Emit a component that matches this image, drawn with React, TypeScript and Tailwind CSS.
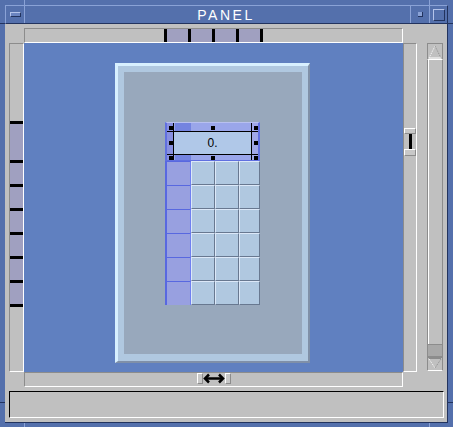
import React from "react";

const Tick = ({ v = false }: { v?: boolean }) =>
  v ? <div className="h-[3px] w-full bg-black shrink-0" /> : <div className="w-[3px] h-full bg-black shrink-0" />;

function Header() {
  const handle = "absolute w-[4px] h-[4px] bg-black";
  return (
    <div className="relative h-[39px] border-t border-t-[#b8c0f0] border-l-2 border-l-[#6070e0] border-r-2 border-r-[#6070e0] border-b border-b-[#6070e0]">
      <div className="grid grid-cols-[6px_77px_6px] grid-rows-[8px_22px_5px] gap-px bg-black w-[91px] h-[37px]">
        <div className="bg-[#8890e0]" />
        <div className="flex">
          <div className="w-[1px] bg-[#98a4ea]" />
          <div className="w-[16px] bg-[#7484e0]" />
          <div className="flex-1 bg-[#9aa6ea]" />
        </div>
        <div className="bg-[#a0a8e8]" />
        <div className="bg-[#8890e0]" />
        <div className="bg-[#b0c8e8] flex items-center justify-center text-[12px] leading-none text-black font-['Liberation_Sans',sans-serif]">
          0.
        </div>
        <div className="bg-[#a0a8e8]" />
        <div className="bg-[#8890e0]" />
        <div className="flex">
          <div className="w-[1px] bg-[#98a4ea]" />
          <div className="w-[16px] bg-[#7484e0]" />
          <div className="flex-1 bg-[#9aa6ea]" />
        </div>
        <div className="bg-[#a0a8e8]" />
      </div>
      <div className={`${handle} left-[2px] top-[3px]`} />
      <div className={`${handle} left-[44px] top-[3px]`} />
      <div className={`${handle} left-[87px] top-[3px]`} />
      <div className={`${handle} left-[2px] top-[18px]`} />
      <div className={`${handle} left-[87px] top-[18px]`} />
      <div className={`${handle} left-[2px] top-[33px]`} />
      <div className={`${handle} left-[44px] top-[33px]`} />
      <div className={`${handle} left-[87px] top-[33px]`} />
    </div>
  );
}

function Row() {
  const cell =
    "h-full bg-[#b0c8e0] border-t border-l border-t-[#dce8f8] border-l-[#dce8f8] border-r border-b border-r-[#687890] border-b-[#687890]";
  return (
    <div className="flex h-[24px]">
      <div className="w-[26px] h-full bg-[#98a0e0] border-l-2 border-l-[#5868e0] border-t border-t-[#5868e0] border-r border-r-[#7080f0]" />
      <div className={`w-[24px] ${cell}`} />
      <div className={`w-[24px] ${cell}`} />
      <div className={`w-[21px] ${cell}`} />
    </div>
  );
}

export default function App() {
  const light = "#8aa2d6";
  return (
    <div className="relative w-[453px] h-[427px] bg-[#5470ac] pt-[5px] pl-[5px] pr-[5px] pb-[4px] overflow-hidden font-['Liberation_Sans',sans-serif]">
      {/* frame corner marks */}
      <div className="absolute left-[24px] top-0 w-px h-[5px] bg-[#8aa2d6]" />
      <div className="absolute left-[429px] top-0 w-px h-[5px] bg-[#8aa2d6]" />
      <div className="absolute left-0 top-[23px] w-[5px] h-px bg-[#22335e]" />
      <div className="absolute right-0 top-[23px] w-[5px] h-px bg-[#22335e]" />
      <div className="absolute left-0 top-[402px] w-[5px] h-px bg-[#22335e]" />
      <div className="absolute right-0 top-[402px] w-[5px] h-px bg-[#22335e]" />
      <div className="absolute left-[24px] bottom-0 w-px h-[4px] bg-[#8aa2d6]" />
      <div className="absolute left-[429px] bottom-0 w-px h-[4px] bg-[#8aa2d6]" />

      {/* title bar */}
      <div className="flex h-[19px] border-t border-l border-t-[#8aa2d6] border-l-[#8aa2d6] border-b border-r border-b-[#22335e] border-r-[#22335e] bg-[#5470ac]">
        <div className="w-[19px] flex items-center justify-center border-r border-r-[#8aa2d6]">
          <div className="w-[11px] h-[5px] bg-[#6a84c0] border-t border-t-[#b4c4ea] border-b border-b-[#22335e] border-l border-l-[#b4c4ea] border-r border-r-[#22335e]" />
        </div>
        <div className="flex-1 flex items-center justify-center pl-[17px] pt-[1px] text-white text-[14px] leading-none tracking-[2.5px]">
          PANEL
        </div>
        <div className="w-[19px] flex items-center justify-center border-l border-l-[#8aa2d6]">
          <div className="w-[5px] h-[5px] bg-[#8aa2d6] border-r border-b border-r-[#22335e] border-b-[#22335e]" />
        </div>
        <div className="w-[18px] flex items-center justify-center border-l border-l-[#8aa2d6]">
          <div className="w-[12px] h-[12px] border border-t-[#b4c4ea] border-l-[#b4c4ea] border-b-[#22335e] border-r-[#22335e]" />
        </div>
      </div>

      {/* gray body */}
      <div className="flex flex-col h-[399px] bg-[#c0c0c0] border-r border-b border-r-[#22335e] border-b-[#22335e]">
        {/* top ruler */}
        <div className="mt-[4px] ml-[19px] w-[379px] h-[15px] border border-t-[#8c8c8c] border-l-[#8c8c8c] border-b-white border-r-white">
          <div className="flex h-full pl-[139px]">
            <Tick />
            <div className="w-[21px] bg-[#a0a0c0]" />
            <Tick />
            <div className="w-[21px] bg-[#a0a0c0]" />
            <Tick />
            <div className="w-[21px] bg-[#a0a0c0]" />
            <Tick />
            <div className="w-[21px] bg-[#a0a0c0]" />
            <Tick />
          </div>
        </div>

        {/* main row */}
        <div className="flex h-[329px]">
          {/* left ruler */}
          <div className="ml-[4px] w-[15px] h-full border border-t-[#8c8c8c] border-l-[#8c8c8c] border-b-white border-r-white flex flex-col pt-[77px]">
            <Tick v />
            <div className="h-[36px] bg-[#a0a0c0]" />
            <Tick v />
            <div className="h-[21px] bg-[#a0a0c0]" />
            <Tick v />
            <div className="h-[21px] bg-[#a0a0c0]" />
            <Tick v />
            <div className="h-[21px] bg-[#a0a0c0]" />
            <Tick v />
            <div className="h-[21px] bg-[#a0a0c0]" />
            <Tick v />
            <div className="h-[21px] bg-[#a0a0c0]" />
            <Tick v />
            <div className="h-[21px] bg-[#a0a0c0]" />
            <Tick v />
          </div>

          {/* canvas */}
          <div className="relative w-[379px] h-full bg-[#6080c0]">
            <div className="absolute left-[91px] top-[20px] w-[195px] h-[300px] border-t-[3px] border-l-[3px] border-t-[#d8f0ff] border-l-[#d8f0ff] border-r-[2px] border-b-[2px] border-r-[#8090a8] border-b-[#8090a8] bg-[#b0c8e0] pt-[6px] pl-[6px] pr-[6px] pb-[7px]">
              <div className="w-full h-full bg-[#98a8bc] pl-[41px] pt-[50px]">
                <div className="w-[95px]">
                  <Header />
                  <Row />
                  <Row />
                  <Row />
                  <Row />
                  <Row />
                  <Row />
                </div>
              </div>
            </div>
          </div>

          {/* right ruler */}
          <div className="w-[14px] h-full border border-t-[#8c8c8c] border-l-[#8c8c8c] border-b-white border-r-white flex flex-col items-center pt-[84px]">
            <div className="w-[12px] h-[6px] bg-[#c8c8c8] border border-t-white border-l-white border-b-[#8c8c8c] border-r-[#8c8c8c]" />
            <div className="w-[3px] h-[15px] bg-black" />
            <div className="w-[12px] h-[7px] bg-[#c8c8c8] border border-t-white border-l-white border-b-[#8c8c8c] border-r-[#8c8c8c]" />
          </div>

          {/* scrollbar */}
          <div className="ml-[10px] w-[16px] h-[328px] flex flex-col">
            <div className="h-[17px] border border-t-[#8c8c8c] border-l-[#8c8c8c] border-r-[#8c8c8c] border-b-white flex items-center justify-center">
              <svg width="14" height="14" viewBox="0 0 14 14">
                <line x1="7" y1="1" x2="1" y2="13" stroke="#ffffff" strokeWidth="1" strokeDasharray="1 1" />
                <line x1="7" y1="1" x2="13" y2="13" stroke="#8c8c8c" strokeWidth="1" strokeDasharray="1 1" />
                <line x1="1" y1="13" x2="13" y2="13" stroke="#ffffff" strokeWidth="1" />
              </svg>
            </div>
            <div className="flex-1 border-l border-r border-l-[#8c8c8c] border-r-[#8c8c8c]">
              <div className="w-px h-full bg-white" />
            </div>
            <div className="h-[13px] bg-[#a8a8a8] border border-[#8c8c8c]" />
            <div className="h-[14px] border border-l-[#8c8c8c] border-r-[#8c8c8c] border-t-[#8c8c8c] border-b-white flex items-start justify-center">
              <svg width="14" height="11" viewBox="0 0 14 11">
                <line x1="1" y1="0.5" x2="13" y2="0.5" stroke="#8c8c8c" strokeWidth="1" />
                <line x1="1" y1="1" x2="7" y2="10" stroke="#ffffff" strokeWidth="1" strokeDasharray="1 1" />
                <line x1="13" y1="1" x2="7" y2="10" stroke="#8c8c8c" strokeWidth="1" strokeDasharray="1 1" />
              </svg>
            </div>
          </div>
        </div>

        {/* bottom ruler */}
        <div className="ml-[19px] w-[379px] h-[15px] border border-t-[#8c8c8c] border-l-[#8c8c8c] border-b-white border-r-white flex items-start pl-[172px]">
          <div className="w-[6px] h-[11px] bg-[#c8c8c8] border border-t-white border-l-white border-b-[#8c8c8c] border-r-[#8c8c8c]" />
          <svg width="22" height="11" viewBox="0 0 22 11">
            <line x1="2" y1="5.5" x2="20" y2="5.5" stroke="#000" strokeWidth="2.5" />
            <polyline points="6,1.5 2,5.5 6,9.5" fill="none" stroke="#000" strokeWidth="2.5" />
            <polyline points="16,1.5 20,5.5 16,9.5" fill="none" stroke="#000" strokeWidth="2.5" />
          </svg>
          <div className="w-[6px] h-[11px] bg-[#c8c8c8] border border-t-white border-l-white border-b-[#8c8c8c] border-r-[#8c8c8c]" />
        </div>

        {/* status */}
        <div className="mt-[4px] ml-[4px] w-[435px] h-[27px] border border-t-black border-l-black border-b-white border-r-white" />
      </div>
    </div>
  );
}
